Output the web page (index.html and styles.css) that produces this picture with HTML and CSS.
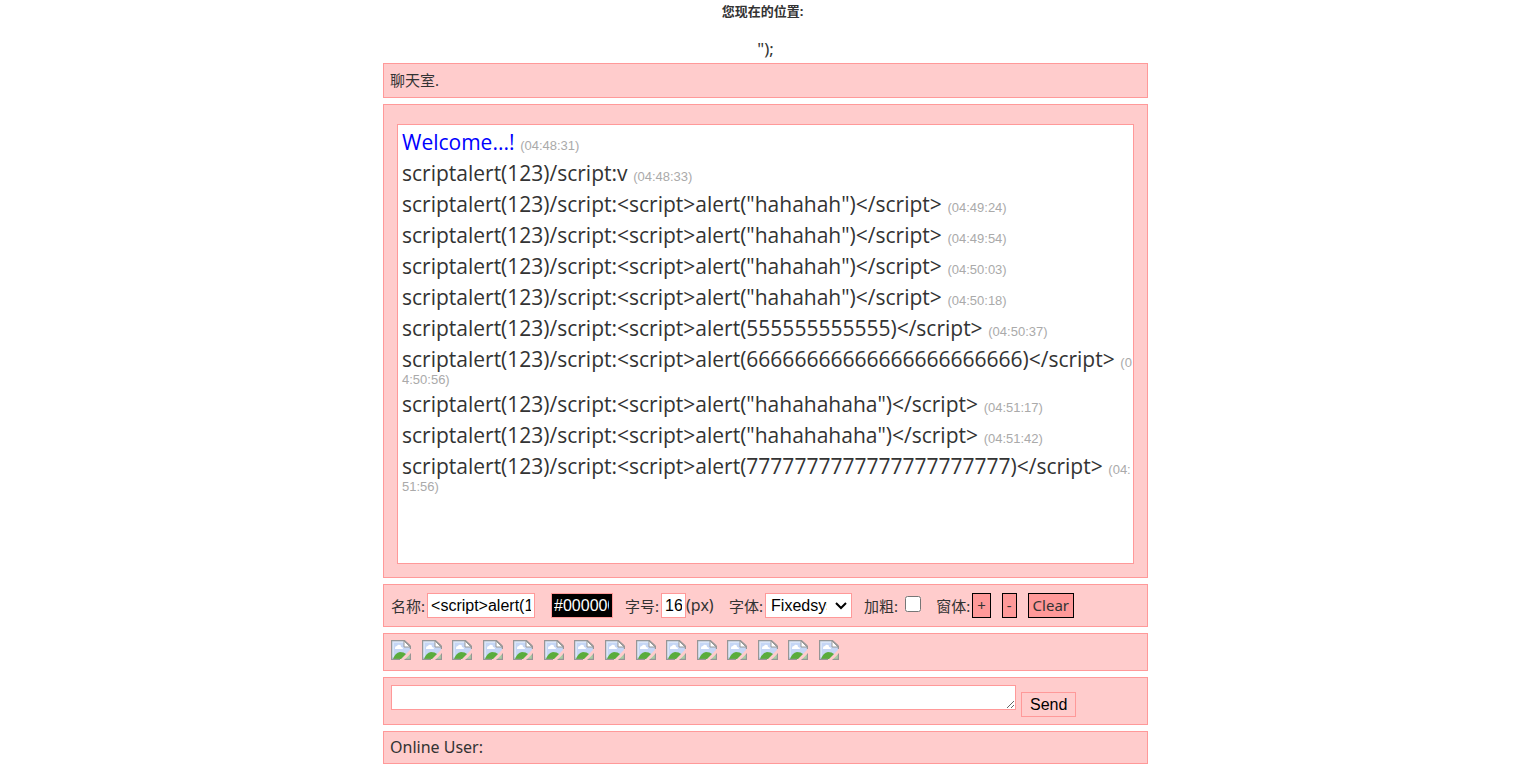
FILE: index.html
```
<!DOCTYPE html>
<html lang="zh-CN">
<head>
<meta charset="utf-8">
<title>聊天室</title>
<link rel="stylesheet" href="styles.css">
</head>
<body>
<svg class="defs" aria-hidden="true">
  <symbol id="broken" viewBox="0 0 20 20">
    <path d="M1 1H14L19 6V10L10 19H1Z" fill="#c5d6f5"/>
    <path d="M1 1H14V3H3V17H1Z" fill="#edf3fc" opacity=".5"/>
    <path d="M4 8Q4 6 6 6Q7 4 9 5Q10 5 10 7Q12 7 12 9H4Z" fill="#fff"/>
    <path d="M2 19Q4 13 9 12Q13 12 15 14L10 19H2Z" fill="#5aac3c"/>
    <path d="M13 1V7H19Z" fill="#fff" stroke="#9a9a9a"/>
    <path d="M19.400 6V9M9 19.400H.6V.6H13.500L19.400 6" fill="none" stroke="#969696" stroke-width="1.200"/>
    <path d="M14 19L19 14V19Z" fill="#a9cfa5"/>
    <path d="M13 19.400H19.400V13" fill="none" stroke="#969696" stroke-width="1.200"/>
    <path d="M10 20L20 10V13L13 20Z" fill="#fcc"/>
  </symbol>
</svg>
<header class="header">
  <h1 class="location">您现在的位置:</h1>
  <p class="stray">");</p>
</header>
<main class="chat">
  <section class="box title">聊天室.</section>
  <section class="box screen">
    <div class="log">
      <p class="msg"><span class="text welcome">Welcome...!</span> <time>(04:48:31)</time></p>
      <p class="msg"><span class="text">scriptalert(123)/script:v</span> <time>(04:48:33)</time></p>
      <p class="msg"><span class="text">scriptalert(123)/script:&lt;script&gt;alert("hahahah")&lt;/script&gt;</span> <time>(04:49:24)</time></p>
      <p class="msg"><span class="text">scriptalert(123)/script:&lt;script&gt;alert("hahahah")&lt;/script&gt;</span> <time>(04:49:54)</time></p>
      <p class="msg"><span class="text">scriptalert(123)/script:&lt;script&gt;alert("hahahah")&lt;/script&gt;</span> <time>(04:50:03)</time></p>
      <p class="msg"><span class="text">scriptalert(123)/script:&lt;script&gt;alert("hahahah")&lt;/script&gt;</span> <time>(04:50:18)</time></p>
      <p class="msg"><span class="text">scriptalert(123)/script:&lt;script&gt;alert(555555555555)&lt;/script&gt;</span> <time>(04:50:37)</time></p>
      <p class="msg"><span class="text">scriptalert(123)/script:&lt;script&gt;alert(66666666666666666666666)&lt;/script&gt;</span> <time>(04:50:56)</time></p>
      <p class="msg"><span class="text">scriptalert(123)/script:&lt;script&gt;alert("hahahahaha")&lt;/script&gt;</span> <time>(04:51:17)</time></p>
      <p class="msg"><span class="text">scriptalert(123)/script:&lt;script&gt;alert("hahahahaha")&lt;/script&gt;</span> <time>(04:51:42)</time></p>
      <p class="msg"><span class="text">scriptalert(123)/script:&lt;script&gt;alert(7777777777777777777777)&lt;/script&gt;</span> <time>(04:51:56)</time></p>
    </div>
  </section>
  <section class="box tools">
    <div class="field name"><label for="name">名称:</label><input class="control name-input" id="name" type="text" value="&lt;script&gt;alert(123)&lt;/script&gt;"></div>
    <input class="control color-input" type="text" value="#000000" aria-label="颜色">
    <div class="field"><label for="size">字号:</label><input class="control size-input" id="size" type="text" value="16"><span class="unit">(px)</span></div>
    <div class="field"><label for="face">字体:</label><select class="control face" id="face"><option>Fixedsys</option></select><svg class="arrow" viewBox="0 0 12 8" aria-hidden="true"><path d="M1 1L6 6L11 1"/></svg></div>
    <div class="field bold"><label for="bold">加粗:</label><input class="check" id="bold" type="checkbox"></div>
    <div class="field window"><span class="caption">窗体:</span><button class="key" type="button">+</button><button class="key" type="button">-</button><button class="key" type="button">Clear</button></div>
  </section>
  <section class="box">
    <div class="faces">
      <svg class="icon"><use href="#broken"/></svg>
      <svg class="icon"><use href="#broken"/></svg>
      <svg class="icon"><use href="#broken"/></svg>
      <svg class="icon"><use href="#broken"/></svg>
      <svg class="icon"><use href="#broken"/></svg>
      <svg class="icon"><use href="#broken"/></svg>
      <svg class="icon"><use href="#broken"/></svg>
      <svg class="icon"><use href="#broken"/></svg>
      <svg class="icon"><use href="#broken"/></svg>
      <svg class="icon"><use href="#broken"/></svg>
      <svg class="icon"><use href="#broken"/></svg>
      <svg class="icon"><use href="#broken"/></svg>
      <svg class="icon"><use href="#broken"/></svg>
      <svg class="icon"><use href="#broken"/></svg>
      <svg class="icon"><use href="#broken"/></svg>
    </div>
  </section>
  <form class="box compose">
    <textarea class="control message" rows="1" aria-label="消息"></textarea>
    <button class="send" type="button">Send</button>
  </form>
  <section class="box online">Online User:</section>
</main>
</body>
</html>
```
FILE: styles.css
```
* { box-sizing: border-box; }
body {
  margin: 0;
  padding: 0 0 8px 16px;
  background: #fff;
  color: #333;
  font: 15px/21px "Noto Sans", "Noto Sans CJK SC", sans-serif;
}
.defs { display: none; }
.header { text-align: center; }
.location { margin: 0 6px 16px 0; font-size: 13px; line-height: 22px; }
.stray { margin: 0; padding-bottom: 4px; font-size: 17px; }
.chat {
  display: flex;
  flex-direction: column;
  gap: 6px;
  max-width: 765px;
  margin: 0 auto;
}
.box { padding: 6px; border: 1px solid #f99; background: #fcc; }
.screen { padding: 19px 13px 13px; }
.log {
  min-height: 440px;
  padding: 2px 0 2px 4px;
  border: 1px solid #f99;
  background: #fff;
}
.msg {
  margin: 0;
  padding: 2px 0;
  font: 13px/14px "Liberation Sans", sans-serif;
  word-break: break-all;
}
.text { margin-right: 2px; font: 21px/27px "Open Sans", sans-serif; }
.welcome { color: #00f; }
time { color: #aaa; }
.tools { display: flex; align-items: center; flex-wrap: wrap; gap: 11px; padding: 8px 6px; }
.field { display: flex; align-items: center; position: relative; }
.field label, .caption { padding: 2px 2px 0 1px; }
.name { margin-right: 5px; }
.control {
  height: 25px;
  margin: 0;
  padding: 1px 3px;
  border: 1px solid #f99;
  border-radius: 0;
  background: #fff;
  color: #000;
  font: 16px/21px "Liberation Sans", sans-serif;
}
.name-input { width: 108px; }
.color-input { width: 62px; padding: 1px 3px 1px 2px; background: #000; color: #fff; }
.size-input { width: 25px; }
.unit { width: 31px; font-size: 16px; }
.face { width: 87px; padding: 0 24px 0 5px; appearance: none; }
.arrow { position: absolute; right: 5px; width: 12px; height: 8px; fill: none; stroke: #000; stroke-width: 2; pointer-events: none; }
.check { width: 16px; height: 16px; margin: 0 3px 4px 5px; }
.key {
  height: 25px;
  margin-right: 11px;
  padding: 0 4px;
  border: 1px solid #000;
  background: #f99;
  color: #333;
  font: inherit;
}
.faces {
  display: flex;
  flex-wrap: wrap;
  justify-content: space-between;
  column-gap: 10px;
  max-width: 449px;
  padding: 0 0 4px 1px;
}
.icon { width: 20px; height: 20px; }
.compose { display: flex; align-items: flex-end; gap: 5px; padding: 7px; }
.message { flex: 0 1 625px; margin-bottom: 7px; overflow: hidden; }
.send {
  height: 25px;
  padding: 0 8px;
  border: 1px solid #f99;
  background: #fcc;
  color: #000;
  font: 16px/21px "Liberation Sans", sans-serif;
}
.online { padding: 5px 6px; font-size: 16px; }
```
